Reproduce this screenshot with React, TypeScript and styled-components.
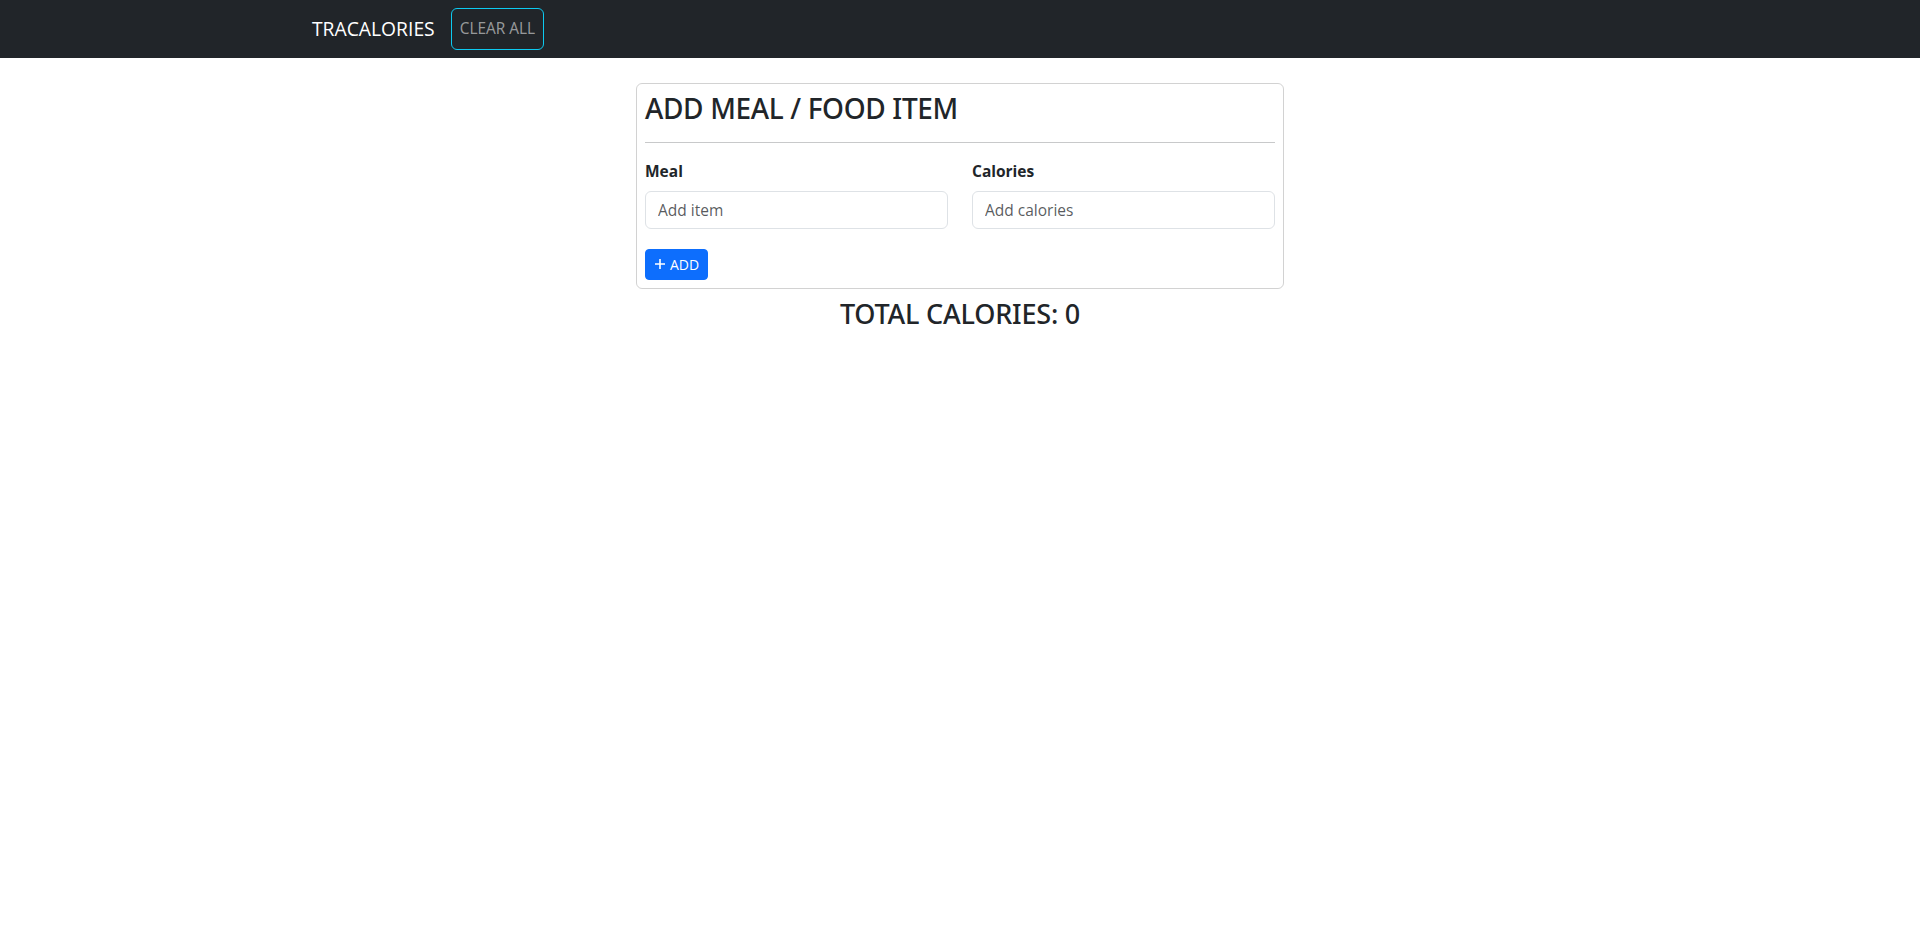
import React, { useState } from 'react';
import styled, { createGlobalStyle } from 'styled-components';

const GlobalStyle = createGlobalStyle`
    * {
        box-sizing: border-box;
    }
    body {
        margin: 0;
        font-family: "Open Sans", "Noto Sans", Arial, sans-serif;
        color: #212529;
        background: #fff;
        font-size: 16px;
        line-height: 1.5;
    }
`;

const Navbar = styled.nav`
    background: #212529;
    padding: 8px 0;
`;

const NavContainer = styled.div`
    max-width: 1320px;
    margin: 0 auto;
    padding: 0 12px;
    display: flex;
    align-items: center;
`;

const Brand = styled.a`
    color: #fff;
    font-size: 19.3px;
    line-height: 30px;
    margin-right: 16px;
    text-decoration: none;
`;

const ClearButton = styled.button`
    font-family: inherit;
    font-size: 15.4px;
    line-height: 24px;
    padding: 8px 8px;
    color: rgba(255, 255, 255, 0.55);
    background: transparent;
    border: 1px solid #0dcaf0;
    border-radius: 6px;
    cursor: pointer;
`;

const Card = styled.div`
    width: 648px;
    margin: 25px auto 0;
    padding: 8px;
    border: 1px solid rgba(0, 0, 0, 0.175);
    border-radius: 6px;
`;

const Title = styled.h2`
    margin: 0;
    font-family: "Noto Sans", "Open Sans", sans-serif;
    font-size: 28px;
    font-weight: 500;
    letter-spacing: -0.35px;
    line-height: 1.2;
`;

const Divider = styled.hr`
    margin: 16px 0;
    border: 0;
    border-top: 1px solid #c8c9ca;
`;

const Fields = styled.div`
    display: grid;
    grid-template-columns: 1fr 1fr;
    column-gap: 24px;
    margin-bottom: 20px;
`;

const Field = styled.div`
    display: flex;
    flex-direction: column;
`;

const Label = styled.label`
    font-weight: 700;
    font-size: 15.5px;
    line-height: 24px;
    margin-bottom: 8px;
`;

const Input = styled.input`
    font-family: inherit;
    font-size: 15.5px;
    line-height: 24px;
    height: 38px;
    padding: 6px 12px;
    color: #212529;
    border: 1px solid #dee2e6;
    border-radius: 6px;
    outline: none;
    &::placeholder {
        color: rgba(33, 37, 41, 0.75);
    }
`;

const AddButton = styled.button`
    display: inline-flex;
    align-items: center;
    gap: 4px;
    font-family: inherit;
    font-size: 14px;
    line-height: 21px;
    padding: 4px 8px;
    color: #fff;
    background: #0d6efd;
    border: 1px solid #0d6efd;
    border-radius: 4px;
    cursor: pointer;
`;

const Total = styled.h3`
    margin: 9px 0 0;
    text-align: center;
    font-family: "Noto Sans", "Open Sans", sans-serif;
    font-size: 27px;
    font-weight: 500;
    letter-spacing: -0.2px;
    line-height: 1.2;
`;

const PlusIcon = () => (
    <svg width="12" height="12" viewBox="0 0 12 12">
        <path d="M6 1v10M1 6h10" stroke="#fff" strokeWidth="1.6" />
    </svg>
);

const App = () => {
    const [meal, setMeal] = useState('');
    const [calories, setCalories] = useState('');

    return (
        <>
            <GlobalStyle />
            <Navbar>
                <NavContainer>
                    <Brand href="#">TRACALORIES</Brand>
                    <ClearButton>CLEAR ALL</ClearButton>
                </NavContainer>
            </Navbar>

            <Card>
                <Title>ADD MEAL / FOOD ITEM</Title>
                <Divider />
                <Fields>
                    <Field>
                        <Label htmlFor="item-name">Meal</Label>
                        <Input id="item-name" placeholder="Add item" value={meal} onChange={e => setMeal(e.target.value)} />
                    </Field>
                    <Field>
                        <Label htmlFor="item-calories">Calories</Label>
                        <Input id="item-calories" placeholder="Add calories" value={calories} onChange={e => setCalories(e.target.value)} />
                    </Field>
                </Fields>
                <AddButton>
                    <PlusIcon /> ADD
                </AddButton>
            </Card>

            <Total>TOTAL CALORIES: 0</Total>
        </>
    );
};

export default App;
